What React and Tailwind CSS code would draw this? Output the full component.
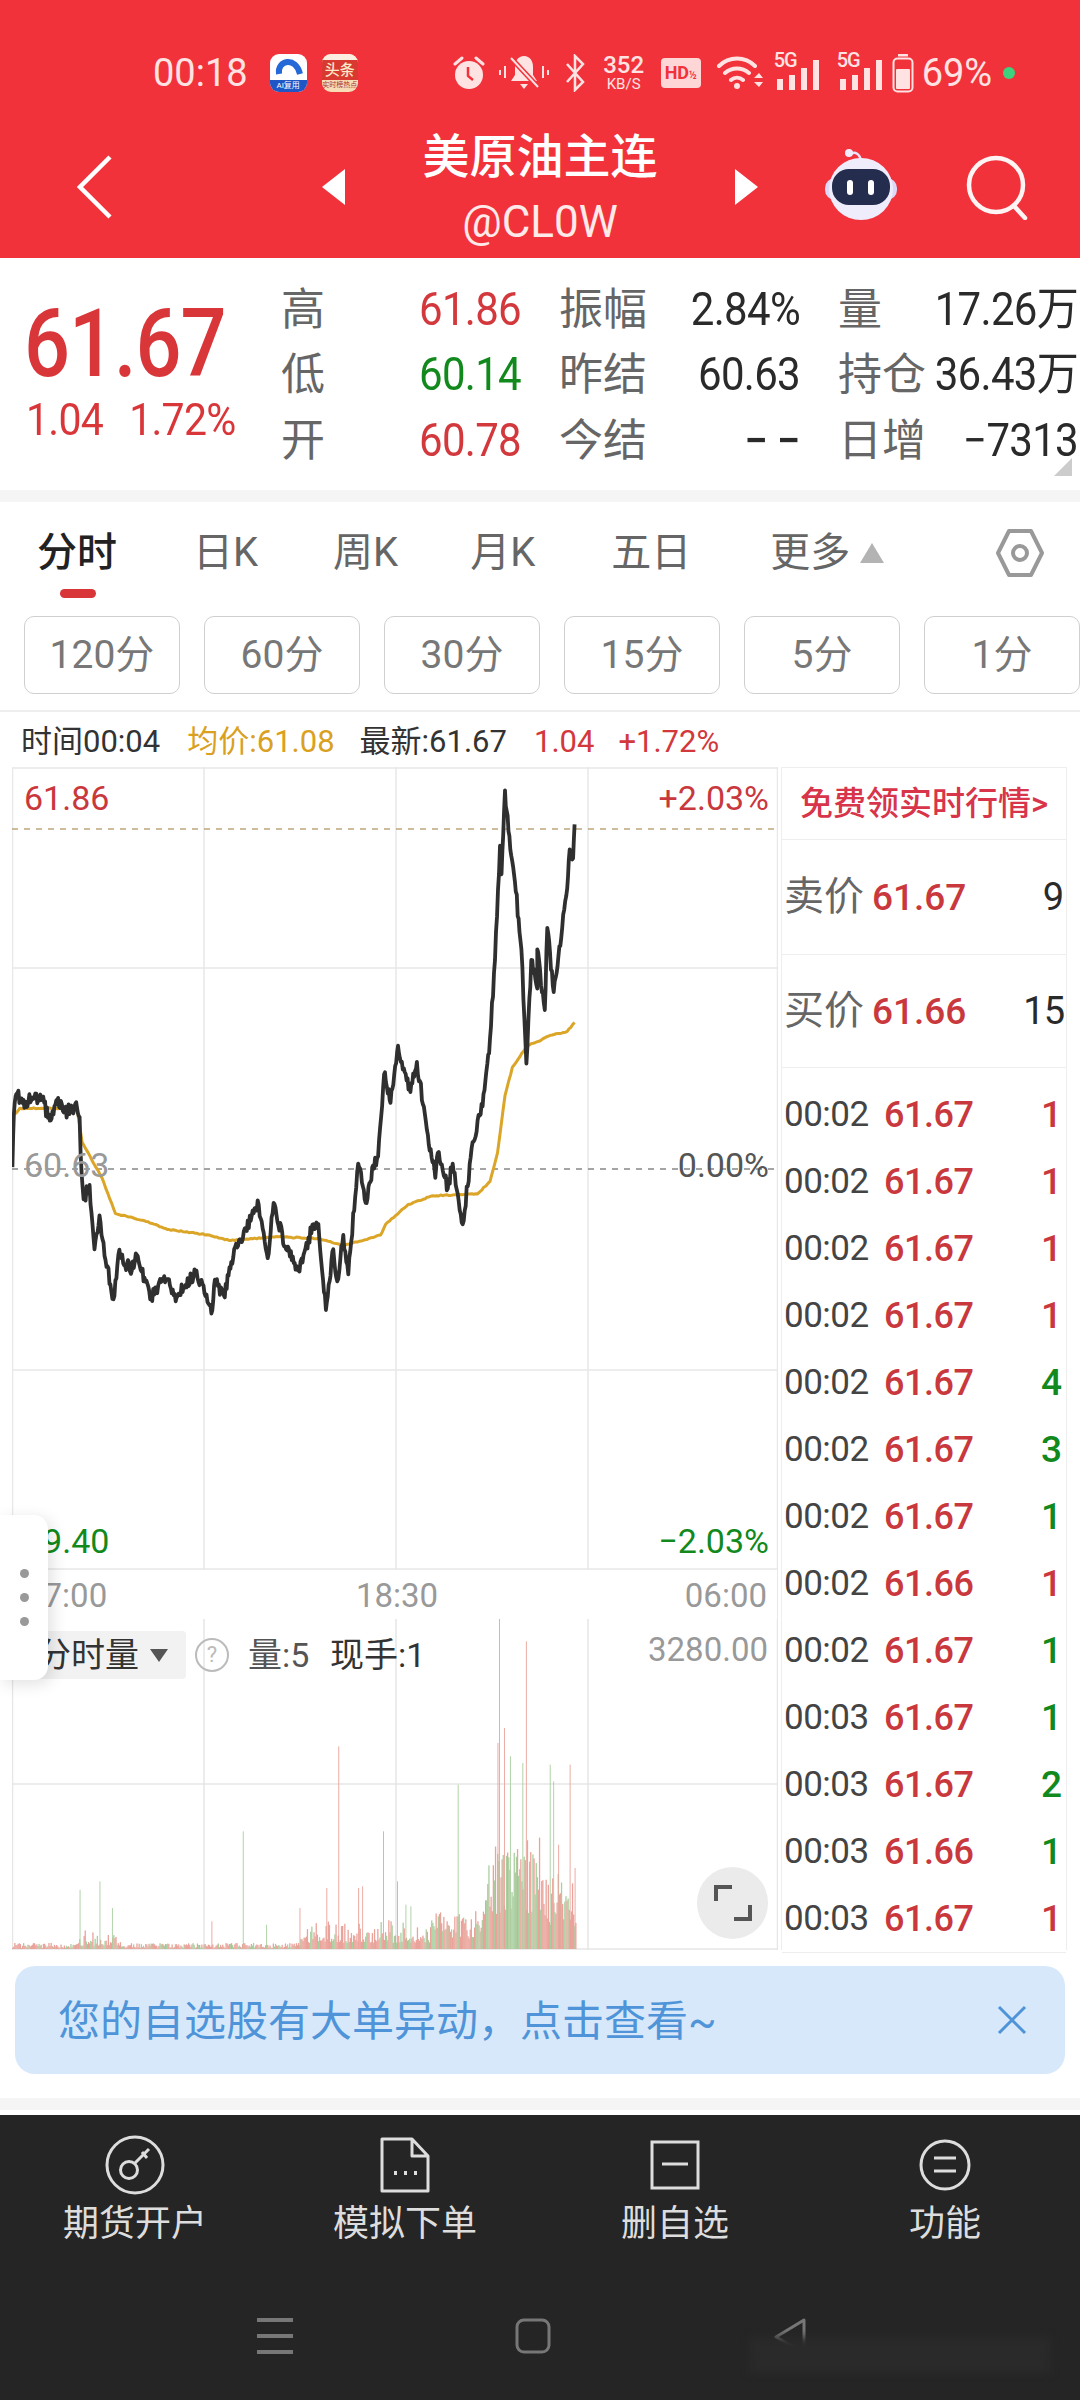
const PRICE = [[25,1140],[28,990],[33,935],[45,960],[65,945],[85,950],[100,1010],[115,960],[130,985],[155,975],[160,1000],[162,1100],[168,1230],[180,1190],[190,1370],[200,1275],[212,1400],[228,1510],[238,1385],[265,1430],[275,1385],[302,1510],[330,1445],[355,1505],[395,1430],[425,1550],[432,1455],[450,1500],[465,1405],[490,1320],[520,1245],[538,1395],[550,1240],[575,1370],[600,1430],[630,1300],[640,1300],[655,1540],[670,1370],[678,1460],[690,1330],[700,1440],[720,1130],[735,1240],[750,1135],[760,1110],[772,880],[785,960],[800,800],[825,930],[838,845],[860,1050],[875,1170],[880,1100],[900,1200],[910,1130],[930,1300],[950,1070],[970,970],[985,780],[995,560],[1005,240],[1008,320],[1015,85],[1022,200],[1035,340],[1048,530],[1058,850],[1068,560],[1080,640],[1080,530],[1095,700],[1100,470],[1113,650],[1130,470],[1140,360],[1145,250],[1152,275],[1155,180]]
const AVG = [[25,1000],[40,975],[155,975],[165,1070],[205,1170],[232,1270],[290,1290],[340,1315],[420,1330],[460,1345],[560,1335],[640,1340],[690,1360],[730,1345],[765,1330],[775,1300],[820,1245],[870,1220],[960,1215],[985,1180],[1000,1100],[1015,940],[1030,860],[1060,800],[1110,770],[1140,760],[1155,735]]
const SPIKES = [[160,1170,0],[200,1145,0],[225,1225,0],[425,1265,1],[488,995,0],[535,1275,0],[602,1225,1],[656,1165,1],[680,740,1],[720,1165,1],[728,1160,1],[770,995,1],[798,1145,1],[815,1215,0],[825,1220,0],[920,855,0],[1003,355,1],[1000,730,1],[1013,685,1],[1025,770,0],[1050,790,0],[1057,425,1],[1105,795,0],[1112,845,0],[1122,1035,1],[1145,795,1],[1155,1105,1]]

const TICKS = [
  ['00:02', '61.67', '1', 'r'], ['00:02', '61.67', '1', 'r'], ['00:02', '61.67', '1', 'r'], ['00:02', '61.67', '1', 'r'],
  ['00:02', '61.67', '4', 'g'], ['00:02', '61.67', '3', 'g'], ['00:02', '61.67', '1', 'g'], ['00:02', '61.66', '1', 'r'],
  ['00:02', '61.67', '1', 'g'], ['00:03', '61.67', '1', 'g'], ['00:03', '61.67', '2', 'g'], ['00:03', '61.66', '1', 'g'],
  ['00:03', '61.67', '1', 'r'],
]

const STATS = [
  ['高', '61.86', 'text-[#d2383c]'], ['振幅', '2.84%', 'text-[#2a2a2a]'], ['量', '17.26万', 'text-[#2a2a2a]'],
  ['低', '60.14', 'text-[#11891c]'], ['昨结', '60.63', 'text-[#2a2a2a]'], ['持仓', '36.43万', 'text-[#2a2a2a]'],
  ['开', '60.78', 'text-[#d2383c]'], ['今结', '− −', 'text-[#2a2a2a] font-medium'], ['日增', '−7313', 'text-[#2a2a2a]'],
]

const TABS = [
  ['日K', 'ml-[76px]'], ['周K', 'ml-[75px]'], ['月K', 'ml-[72px]'], ['五日', 'ml-[76px]'], ['更多', 'ml-[79px]'],
]

const rand = (seed) => {
  let s = seed
  return () => (s = (s * 16807) % 2147483647) / 2147483647
}

// zoom crop coords -> local svg coords, with a bit of noise between points
const toPath = (pts, amp, seed, step) => {
  const r = rand(seed)
  let d = ''
  pts.forEach((p, i) => {
    const next = pts[i + 1]
    if (!next) {
      d += `L${(p[0] / 2.01 - 12).toFixed(1)} ${(p[1] / 2.8 - 7).toFixed(1)}`
      return
    }
    const n = Math.max(1, Math.round(Math.abs(next[0] - p[0]) / step))
    for (let k = 0; k < n; k++) {
      const t = k / n
      const x = p[0] + (next[0] - p[0]) * t
      const y = p[1] + (next[1] - p[1]) * t + (k === 0 ? 0 : (r() - 0.5) * amp)
      d += `${d ? 'L' : 'M'}${(x / 2.01 - 12).toFixed(1)} ${(y / 2.8 - 7).toFixed(1)}`
    }
  })
  return d
}

const priceD = toPath(PRICE, 36, 77, 2)
const avgD = toPath(AVG, 3, 13, 4)

const volBars = (() => {
  const r = rand(4242)
  const bars = []
  for (let x = 12; x < 576; x += 1.1) {
    let h = 2
    if (x > 78 && x < 120) h = 3 + r() * r() * 22
    else if (x < 300) h = 1 + r() * 5
    else if (x < 430) h = 6 + r() * r() * 26
    else if (x < 484) h = 10 + r() * 28
    else if (x < 540) h = 35 + r() * 80
    else h = 22 + r() * 55
    const green = x > 508 && x < 540 ? r() < 0.6 : r() < 0.3
    bars.push({ x: x - 12, h, green })
  }
  SPIKES.forEach((s) => bars.push({ x: s[0] / 2.01 - 12, h: (1348 - s[1]) / 3, green: !s[2], thin: true }))
  return bars
})()

function AlarmIcon() {
  return (
    <svg width="32" height="36" viewBox="0 0 32 36" fill="none">
      <circle cx="16" cy="20" r="14" fill="#ffe3e3" />
      <path d="M15 12v9l5 4" stroke="#f1323b" strokeWidth="2.5" />
      <path d="M2 9l7-6M30 9l-7-6" stroke="#ffe3e3" strokeWidth="3" strokeLinecap="round" />
    </svg>
  )
}

function MuteIcon() {
  return (
    <svg width="50" height="36" viewBox="0 0 50 36" fill="none">
      <path d="M25 1c-6 0-9 5-9 11v8l-4 6h26l-4-6v-8c0-6-3-11-9-11z" fill="#ffe3e3" />
      <path d="M21 29h8l-4 5z" fill="#ffe3e3" />
      <path d="M12 3l27 29" stroke="#f1323b" strokeWidth="5" />
      <path d="M12 3l27 29" stroke="#ffe3e3" strokeWidth="2" />
      <path d="M1 15v5M6 11v12M44 11v12M49 15v5" stroke="#ffe3e3" strokeWidth="2" />
    </svg>
  )
}

function BluetoothIcon() {
  return (
    <svg width="20" height="38" viewBox="0 0 20 38" fill="none" stroke="#ffe3e3" strokeWidth="2.5">
      <path d="M2 10l16 18-8 8V2l8 8L2 28" />
    </svg>
  )
}

function WifiIcon() {
  return (
    <svg width="46" height="36" viewBox="0 0 46 36" fill="none" stroke="#ffe3e3" strokeWidth="4" strokeLinecap="round">
      <path d="M2 11c10-10 26-10 36 0M8 18c7-6 17-6 24 0M14 25c3.500-3 8.500-3 12 0" />
      <circle cx="20" cy="31" r="3" fill="#ffe3e3" stroke="none" />
      <path d="M37 23l5-5 4 5zM37 27l5 5 4-5z" fill="#ffe3e3" stroke="none" />
    </svg>
  )
}

function SignalIcon() {
  return (
    <div className="flex items-end relative w-[46px] h-[34px]">
      <span className="absolute left-0 top-[-6px] text-[20px] tracking-[-1px] leading-none font-medium text-[#ffe3e3]">5G</span>
      <span className="absolute left-[3px] bottom-0 w-[6px] h-[11px] bg-[#ffe3e3]" />
      <span className="absolute left-[15px] bottom-0 w-[6px] h-[15px] bg-[#ffe3e3]" />
      <span className="absolute left-[27px] bottom-0 w-[6px] h-[22px] bg-[#ffe3e3]" />
      <span className="absolute left-[39px] bottom-0 w-[6px] h-[30px] bg-[#ffe3e3]" />
    </div>
  )
}

function BatteryIcon() {
  return (
    <svg width="22" height="40" viewBox="0 0 22 40" fill="none">
      <rect x="6" y="1" width="10" height="2.500" fill="#ffe3e3" />
      <rect x="1.500" y="5.500" width="19" height="33" rx="4" stroke="#ffe3e3" strokeWidth="2" />
      <rect x="4" y="16" width="14" height="20" rx="1" fill="#ffe3e3" />
    </svg>
  )
}

function RobotIcon() {
  return (
    <svg width="76" height="72" viewBox="0 0 76 72" fill="none">
      <path d="M28 6c4-3 9 0 10 7" stroke="#e8e4fa" strokeWidth="2.500" />
      <circle cx="26" cy="5" r="4" fill="#f0ecfc" />
      <rect x="2" y="30" width="72" height="22" rx="10" fill="#dcd8f6" />
      <ellipse cx="38" cy="41" rx="32" ry="31" fill="#efedfc" />
      <rect x="9" y="21" width="58" height="36" rx="17" fill="#242d4e" />
      <rect x="24" y="32" width="6" height="15" rx="3" fill="#ffffff" />
      <rect x="45" y="32" width="6" height="15" rx="3" fill="#ffffff" />
    </svg>
  )
}

function Header() {
  return (
    <div className="h-[258px] bg-[#f1323b] text-white">
      <div className="h-[40px] flex items-center pl-[153px] translate-y-[53px] text-[#ffe3e3]">
        <span className="text-[38px] leading-none">00:18</span>
        <div className="ml-[22px] w-[37px] h-[38px] rounded-[9px] bg-white overflow-hidden flex flex-col items-center">
          <svg width="37" height="26" viewBox="0 0 37 26" fill="none">
            <path d="M9 20C7 6 26 2 30 20" stroke="#2568d8" strokeWidth="6" />
          </svg>
          <div className="w-full flex-1 bg-[#1f55c4] text-[8px] leading-[12px] text-center text-white">AI复用</div>
        </div>
        <div className="ml-[15px] w-[36px] h-[38px] rounded-[9px] overflow-hidden bg-[#f7dcb6] flex flex-col">
          <div className="h-[6px] bg-[#fbeee0]" />
          <div className="h-[20px] bg-[#d83a32] text-[15px] leading-[20px] text-center text-[#fbe9c8] font-medium">头条</div>
          <div className="text-[7px] leading-[11px] text-center text-[#a33]">实时榜热点</div>
        </div>
        <div className="ml-[95px]"><AlarmIcon /></div>
        <div className="ml-[14px]"><MuteIcon /></div>
        <div className="ml-[16px]"><BluetoothIcon /></div>
        <div className="ml-[16px] w-[46px] flex flex-col items-center text-[#ffe3e3]">
          <span className="text-[24px] leading-[22px] font-medium">352</span>
          <span className="text-[15px] leading-[16px]">KB/S</span>
        </div>
        <div className="ml-[14px] w-[40px] h-[30px] rounded-[4px] bg-[#ffd6d6] text-[#f1323b] text-[18px] leading-[30px] font-bold text-center">HD<span className="text-[10px]">½</span></div>
        <div className="ml-[16px]"><WifiIcon /></div>
        <div className="ml-[11px]"><SignalIcon /></div>
        <div className="ml-[17px]"><SignalIcon /></div>
        <div className="ml-[9px]"><BatteryIcon /></div>
        <span className="ml-[8px] text-[38px] leading-none">69%</span>
        <span className="ml-[11px] w-[12px] h-[12px] rounded-full bg-[#3fd27e]" />
      </div>
      <div className="mt-[86px] flex items-center h-[128px] pl-[77px]">
        <svg className="-mt-[6px]" width="35" height="64" viewBox="0 0 35 64" fill="none" stroke="#ffffff" strokeWidth="4.500">
          <path d="M33 2L3 32l30 30" />
        </svg>
        <svg className="ml-[210px] -mt-[6px]" width="23" height="36" viewBox="0 0 23 36" fill="#ffffff"><path d="M23 0v36L0 18z" /></svg>
        <div className="w-[390px] flex flex-col items-center">
          <span className="text-[47px] leading-[64px] font-medium">美原油主连</span>
          <span className="text-[44px] leading-[66px] text-[#ffe9e9]">@CL0W</span>
        </div>
        <svg className="-mt-[6px]" width="23" height="36" viewBox="0 0 23 36" fill="#ffffff"><path d="M0 0v36l23-18z" /></svg>
        <div className="ml-[65px] -mt-[12px]"><RobotIcon /></div>
        <svg className="ml-[67px] -mt-[6px]" width="62" height="66" viewBox="0 0 62 66" fill="none" stroke="#fff4f4" strokeWidth="4.500">
          <circle cx="30" cy="31" r="27" />
          <path d="M48 52l11 12" strokeLinecap="round" />
        </svg>
      </div>
    </div>
  )
}

function Quote() {
  return (
    <div className="relative h-[232px] bg-white flex items-start">
      <div className="w-[281px] pl-[24px] pt-[43px]">
        <div className="text-[81px] leading-[88px] font-medium text-[#d9363a] tracking-[-1px] scale-y-[1.16]">61.67</div>
        <div className="mt-[9px] pl-[2px] text-[41px] leading-[44px] text-[#d9363a] flex tracking-[-0.7px] scale-y-[1.06]">
          <span>1.04</span>
          <span className="ml-[26px]">1.72%</span>
        </div>
      </div>
      <div className="grid grid-cols-[240px_241px_240px] gap-x-[38px] pt-[19px]">
        {STATS.map((s) => (
          <div key={s[0]} className="h-[65.500px] flex items-center justify-between">
            <span className="text-[44px] leading-none text-[#666666]">{s[0]}</span>
            <span className={`text-[42px] leading-none tracking-[-0.7px] scale-y-[1.08] ${s[2]}`}>{s[1]}</span>
          </div>
        ))}
      </div>
      <span className="absolute left-[1054px] top-[200px] w-0 h-0 border-l-[18px] border-l-transparent border-b-[18px] border-b-[#cccccc]" />
    </div>
  )
}

function Tabs() {
  return (
    <div className="relative h-[114px] bg-white flex items-center pl-[37px] pb-[12px] text-[40px] leading-none text-[#666666]">
      <span className="text-[#222222] font-medium">分时</span>
      {TABS.map((t) => <span key={t[0]} className={t[1]}>{t[0]}</span>)}
      <svg className="ml-[10px]" width="24" height="20" viewBox="0 0 24 20" fill="#b3b3b3"><path d="M12 0l12 20H0z" /></svg>
      <svg className="ml-[112px]" width="48" height="50" viewBox="0 0 48 50" fill="none" stroke="#999999" strokeWidth="4">
        <path d="M13 3h22l11 22-11 22H13L2 25z" strokeLinejoin="round" />
        <circle cx="24" cy="25" r="7" />
      </svg>
      <span className="absolute left-[60px] top-[87px] w-[36px] h-[9px] rounded-full bg-[#d9363a]" />
    </div>
  )
}

function Periods() {
  return (
    <div className="h-[96px] bg-white border-b-2 border-[#eeeeee] pl-[24px] flex gap-[24px] overflow-hidden">
      {['120分', '60分', '30分', '15分', '5分', '1分'].map((p) => (
        <div key={p} className="w-[156px] h-[78px] shrink-0 border border-[#cfcfcf] rounded-[10px] flex items-center justify-center text-[39px] leading-none text-[#777777]">{p}</div>
      ))}
    </div>
  )
}

function InfoRow() {
  return (
    <div className="h-[55px] bg-white flex items-center pl-[21px] pt-[3px] text-[31px] leading-none whitespace-nowrap">
      <span className="text-[#333333]">时间00:04</span>
      <span className="ml-[27px] text-[#d9a11f]">均价:61.08</span>
      <span className="ml-[25px] text-[#333333]">最新:61.67</span>
      <span className="ml-[27px] text-[#d2383c]">1.04</span>
      <span className="ml-[24px] text-[#d2383c]">+1.72%</span>
    </div>
  )
}

function PriceChart() {
  return (
    <div className="relative h-[803px]">
      <svg className="block" width="766" height="803" viewBox="0 0 766 803" fill="none">
        <path d="M0.500 0V803M192 0V803M384 0V803M576 0V803M765.500 0V803M0 1H766M0 201H766M0 603H766M0 802H766" stroke="#e8e8e8" strokeWidth="1.500" />
        <path d="M0 62H766" stroke="#bda77a" strokeWidth="1.500" strokeDasharray="6 6" />
        <path d="M0 402H766" stroke="#888888" strokeWidth="1.500" strokeDasharray="6 6" />
        <path d={avgD} stroke="#dba528" strokeWidth="3" strokeLinejoin="round" />
        <path d={priceD} stroke="#2f2f2f" strokeWidth="3.800" strokeLinejoin="round" />
      </svg>
      <span className="absolute left-[12px] top-[14px] text-[34px] leading-[34px] text-[#c9383c]">61.86</span>
      <span className="absolute right-[9px] top-[14px] text-[34px] leading-[34px] text-[#c9383c]">+2.03%</span>
      <span className="absolute left-[12px] top-[381px] text-[34px] leading-[34px] text-[#999999]">60.63</span>
      <span className="absolute right-[9px] top-[381px] text-[34px] leading-[34px] text-[#555555]">0.00%</span>
      <span className="absolute left-[12px] top-[757px] text-[34px] leading-[34px] text-[#11891c]">59.40</span>
      <span className="absolute right-[9px] top-[757px] text-[34px] leading-[34px] text-[#11891c]">−2.03%</span>
    </div>
  )
}

function Volume() {
  return (
    <div className="relative h-[331px]">
      <svg className="block" width="766" height="331" viewBox="0 0 766 331" fill="none">
        <path d="M0.500 0V331M192 0V331M384 0V331M576 0V331M765.500 0V331M0 165H766M0 330H766" stroke="#e6e6e6" strokeWidth="1.500" />
        {volBars.map((b, i) => (
          <rect key={i} x={b.x} y={330 - b.h} width={b.thin ? 0.9 : 1.3} height={b.h} fill={b.green ? '#a9cf9f' : '#eaa39b'} />
        ))}
      </svg>
      <div className="absolute left-0 top-[12px] h-[48px] w-[174px] bg-[#f2f2f2] rounded-[4px] flex items-center pl-[25px] text-[34px] leading-none text-[#333333]">
        分时量
        <svg className="ml-[11px]" width="18" height="13" viewBox="0 0 18 13" fill="#555555"><path d="M0 0h18L9 13z" /></svg>
      </div>
      <div className="absolute left-[183px] top-[19px] w-[34px] h-[34px] rounded-full border-2 border-[#bbbbbb] flex items-center justify-center text-[22px] leading-none text-[#bbbbbb]">?</div>
      <span className="absolute left-[236px] top-[19px] text-[34px] leading-none text-[#555555]">量:5</span>
      <span className="absolute left-[318px] top-[19px] text-[34px] leading-none text-[#333333]">现手:1</span>
      <span className="absolute right-[10px] top-[14px] text-[33px] leading-none text-[#999999]">3280.00</span>
      <div className="absolute left-[685px] top-[248px] w-[71px] h-[72px] rounded-full bg-[#ebebeb] flex items-center justify-center">
        <svg width="38" height="38" viewBox="0 0 38 38" fill="none" stroke="#555555" strokeWidth="4">
          <path d="M2 17V3h16M36 21v14H20" />
        </svg>
      </div>
    </div>
  )
}

function Tape() {
  return (
    <div className="w-[286px] ml-[3px] h-[1183px] border-x border-[#eeeeee] bg-white whitespace-nowrap">
      <div className="h-[73px] border-y border-[#eeeeee] flex items-center justify-center text-[33px] leading-none text-[#d8344a] font-medium">免费领实时行情&gt;</div>
      <div className="h-[115px] border-b border-[#eeeeee] flex items-center pl-[2px] pr-[2px]">
        <span className="text-[40px] leading-none text-[#666666]">卖价</span>
        <span className="ml-[8px] text-[37px] leading-none font-medium text-[#c9383c]">61.67</span>
        <span className="ml-auto text-[38px] leading-none text-[#2a2a2a]">9</span>
      </div>
      <div className="h-[113px] border-b border-[#eeeeee] flex items-center pl-[2px] pr-[2px]">
        <span className="text-[40px] leading-none text-[#666666]">买价</span>
        <span className="ml-[8px] text-[37px] leading-none font-medium text-[#c9383c]">61.66</span>
        <span className="ml-auto text-[38px] leading-none tracking-[-1px] text-[#2a2a2a]">15</span>
      </div>
      <div className="pt-[13px] border-b border-[#eeeeee]">
        {TICKS.map((t, i) => (
          <div key={i} className="h-[67px] flex items-center pl-[2px] pr-[4px]">
            <span className="w-[100px] text-[35px] leading-none text-[#444444] tracking-[-0.5px]">{t[0]}</span>
            <span className="text-[36px] leading-none font-medium text-[#c9383c] tracking-[-0.5px]">{t[1]}</span>
            <span className={`ml-auto text-[37px] leading-none font-medium ${t[3] === 'g' ? 'text-[#11891c]' : 'text-[#c9383c]'}`}>{t[2]}</span>
          </div>
        ))}
      </div>
    </div>
  )
}

function Banner() {
  return (
    <div className="bg-white h-[148px] pt-[16px] px-[15px]">
      <div className="h-[108px] rounded-[20px] bg-[#d7e8fa] flex items-center pl-[43px] pr-[38px] text-[42px] leading-none text-[#4f94d8]">
        <span className="mt-[3px]">您的自选股有大单异动，点击查看~</span>
        <svg className="ml-auto" width="30" height="30" viewBox="0 0 30 30" fill="none" stroke="#4f94d8" strokeWidth="3">
          <path d="M2 2l26 26M28 2L2 28" />
        </svg>
      </div>
    </div>
  )
}

function BottomBar() {
  return (
    <div className="relative h-[285px] bg-[#252525]">
      <div className="grid grid-cols-4 text-[#dddddd] text-[36px] leading-none pt-[17px]">
        <div className="flex flex-col items-center">
          <svg className="h-[66px]" width="60" height="60" viewBox="0 0 60 60" fill="none" stroke="#dddddd" strokeWidth="3">
            <circle cx="30" cy="30" r="28" />
            <circle cx="24" cy="35" r="8.500" />
            <path d="M30 28l14-14M37 17l5 6" />
          </svg>
          <span className="mt-[8px]">期货开户</span>
        </div>
        <div className="flex flex-col items-center">
          <svg className="h-[66px]" width="50" height="56" viewBox="0 0 50 56" fill="none" stroke="#dddddd" strokeWidth="3">
            <path d="M2 2h30l16 17v35H2zM32 2v17h16" strokeLinejoin="round" />
            <path d="M14 36h3M24 36h3M34 36h3" strokeWidth="4" />
          </svg>
          <span className="mt-[8px]">模拟下单</span>
        </div>
        <div className="flex flex-col items-center">
          <svg className="h-[66px]" width="50" height="50" viewBox="0 0 50 50" fill="none" stroke="#dddddd" strokeWidth="3">
            <rect x="2" y="2" width="46" height="46" />
            <path d="M12 24h26" />
          </svg>
          <span className="mt-[8px]">删自选</span>
        </div>
        <div className="flex flex-col items-center">
          <svg className="h-[66px]" width="52" height="52" viewBox="0 0 52 52" fill="none" stroke="#dddddd" strokeWidth="3">
            <circle cx="26" cy="26" r="24" />
            <path d="M15 19h22M15 32h22" />
          </svg>
          <span className="mt-[8px]">功能</span>
        </div>
      </div>
      <div className="flex items-center pl-[257px] mt-[75px]">
        <svg width="36" height="36" viewBox="0 0 36 36" fill="#777777">
          <rect y="0" width="36" height="4" /><rect y="16" width="36" height="4" /><rect y="32" width="36" height="4" />
        </svg>
        <svg className="ml-[222px]" width="36" height="36" viewBox="0 0 36 36" fill="none" stroke="#777777" strokeWidth="3">
          <rect x="2" y="2" width="32" height="32" rx="7" />
        </svg>
        <svg className="ml-[221px]" width="36" height="38" viewBox="0 0 36 38" fill="none" stroke="#777777" strokeWidth="3">
          <path d="M32 3L4 20l28 16z" strokeLinejoin="round" />
        </svg>
      </div>
      <div className="absolute left-[750px] top-[222px] w-[300px] h-[36px] bg-[#2a2a2a] blur-[4px]" />
    </div>
  )
}

export default function App() {
  return (
    <div className="relative w-[1080px] h-[2400px] overflow-hidden bg-white font-['Roboto','Noto_Sans_CJK_SC',sans-serif]">
      <Header />
      <Quote />
      <div className="h-[12px] bg-[#f5f5f5]" />
      <Tabs />
      <Periods />
      <InfoRow />
      <div className="flex pl-[12px] h-[1183px]">
        <div className="w-[766px]">
          <PriceChart />
          <div className="relative h-[49px] border-x border-[#e8e8e8] text-[33px] leading-none text-[#999999]">
            <span className="absolute left-[12px] top-[9px]">17:00</span>
            <span className="absolute left-[384px] -translate-x-1/2 top-[9px]">18:30</span>
            <span className="absolute right-[10px] top-[9px]">06:00</span>
          </div>
          <Volume />
        </div>
        <Tape />
      </div>
      <Banner />
      <div className="h-[12px] bg-[#f5f5f5]" />
      <div className="h-[5px] bg-white" />
      <BottomBar />
      <div className="absolute left-0 top-[1515px] w-[48px] h-[165px] bg-white rounded-r-[14px] shadow-[4px_4px_16px_rgba(0,0,0,0.12)] flex flex-col items-center justify-center gap-[15px]">
        <span className="w-[9px] h-[9px] rounded-full bg-[#999999]" />
        <span className="w-[9px] h-[9px] rounded-full bg-[#999999]" />
        <span className="w-[9px] h-[9px] rounded-full bg-[#999999]" />
      </div>
    </div>
  )
}
